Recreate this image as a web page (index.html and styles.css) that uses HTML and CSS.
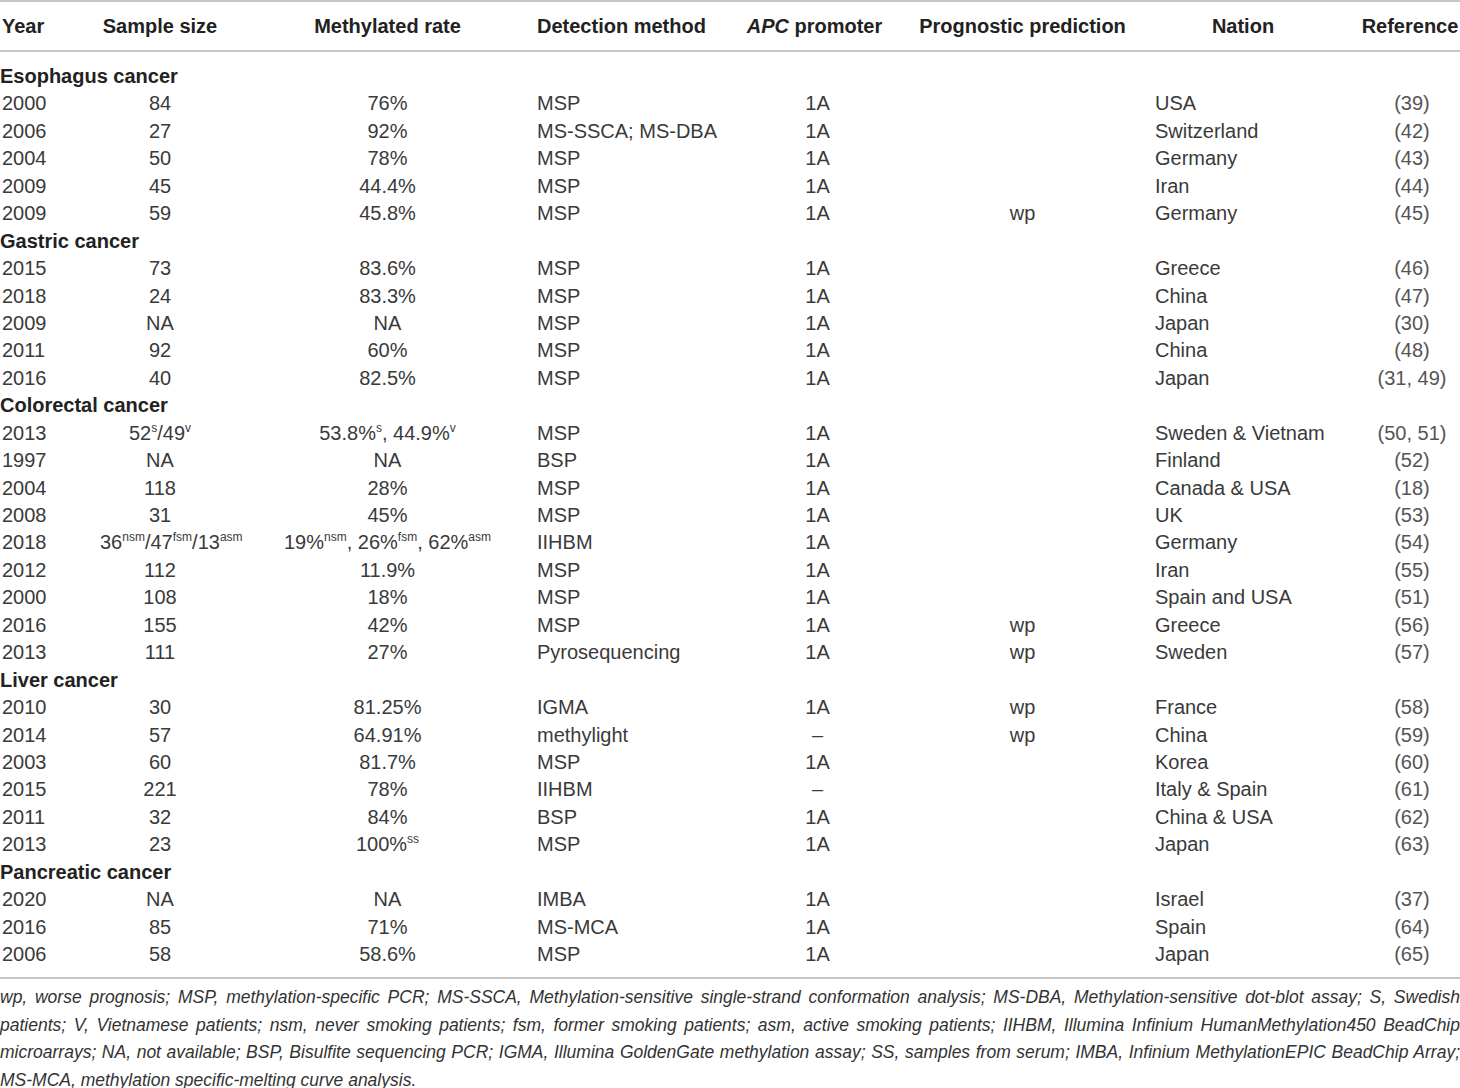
FILE: index.html
```html
<!DOCTYPE html>
<html lang="en">
<head>
    <meta charset="UTF-8">
    <meta name="viewport" content="width=device-width, initial-scale=1.0">
    <title>APC promoter methylation in digestive cancers</title>
    <link rel="stylesheet" href="styles.css">
</head>
<body>
    <table class="data">
        <colgroup>
            <col class="c-year">
            <col class="c-size">
            <col class="c-rate">
            <col class="c-method">
            <col class="c-apc">
            <col class="c-prog">
            <col class="c-nation">
            <col class="c-ref">
        </colgroup>
        <thead>
            <tr>
                <th class="year">Year</th>
                <th class="mid">Sample size</th>
                <th class="rate">Methylated rate</th>
                <th class="left">Detection method</th>
                <th class="mid apc"><i>APC</i> promoter</th>
                <th class="mid">Prognostic prediction</th>
                <th class="mid">Nation</th>
                <th class="ref">Reference</th>
            </tr>
        </thead>
        <tbody>
            <tr class="section first"><td colspan="8">Esophagus cancer</td></tr>
            <tr><td class="year">2000</td><td class="mid">84</td><td class="rate">76%</td><td>MSP</td><td class="mid">1A</td><td class="mid"></td><td>USA</td><td class="ref">(39)</td></tr>
            <tr><td class="year">2006</td><td class="mid">27</td><td class="rate">92%</td><td>MS-SSCA; MS-DBA</td><td class="mid">1A</td><td class="mid"></td><td>Switzerland</td><td class="ref">(42)</td></tr>
            <tr><td class="year">2004</td><td class="mid">50</td><td class="rate">78%</td><td>MSP</td><td class="mid">1A</td><td class="mid"></td><td>Germany</td><td class="ref">(43)</td></tr>
            <tr><td class="year">2009</td><td class="mid">45</td><td class="rate">44.4%</td><td>MSP</td><td class="mid">1A</td><td class="mid"></td><td>Iran</td><td class="ref">(44)</td></tr>
            <tr><td class="year">2009</td><td class="mid">59</td><td class="rate">45.8%</td><td>MSP</td><td class="mid">1A</td><td class="mid">wp</td><td>Germany</td><td class="ref">(45)</td></tr>

            <tr class="section"><td colspan="8">Gastric cancer</td></tr>
            <tr><td class="year">2015</td><td class="mid">73</td><td class="rate">83.6%</td><td>MSP</td><td class="mid">1A</td><td class="mid"></td><td>Greece</td><td class="ref">(46)</td></tr>
            <tr><td class="year">2018</td><td class="mid">24</td><td class="rate">83.3%</td><td>MSP</td><td class="mid">1A</td><td class="mid"></td><td>China</td><td class="ref">(47)</td></tr>
            <tr><td class="year">2009</td><td class="mid">NA</td><td class="rate">NA</td><td>MSP</td><td class="mid">1A</td><td class="mid"></td><td>Japan</td><td class="ref">(30)</td></tr>
            <tr><td class="year">2011</td><td class="mid">92</td><td class="rate">60%</td><td>MSP</td><td class="mid">1A</td><td class="mid"></td><td>China</td><td class="ref">(48)</td></tr>
            <tr><td class="year">2016</td><td class="mid">40</td><td class="rate">82.5%</td><td>MSP</td><td class="mid">1A</td><td class="mid"></td><td>Japan</td><td class="ref">(31, 49)</td></tr>

            <tr class="section"><td colspan="8">Colorectal cancer</td></tr>
            <tr><td class="year">2013</td><td class="mid">52<sup>s</sup>/49<sup>v</sup></td><td class="rate">53.8%<sup>s</sup>, 44.9%<sup>v</sup></td><td>MSP</td><td class="mid">1A</td><td class="mid"></td><td>Sweden &amp; Vietnam</td><td class="ref">(50, 51)</td></tr>
            <tr><td class="year">1997</td><td class="mid">NA</td><td class="rate">NA</td><td>BSP</td><td class="mid">1A</td><td class="mid"></td><td>Finland</td><td class="ref">(52)</td></tr>
            <tr><td class="year">2004</td><td class="mid">118</td><td class="rate">28%</td><td>MSP</td><td class="mid">1A</td><td class="mid"></td><td>Canada &amp; USA</td><td class="ref">(18)</td></tr>
            <tr><td class="year">2008</td><td class="mid">31</td><td class="rate">45%</td><td>MSP</td><td class="mid">1A</td><td class="mid"></td><td>UK</td><td class="ref">(53)</td></tr>
            <tr><td class="year">2018</td><td class="mid">36<sup>nsm</sup>/47<sup>fsm</sup>/13<sup>asm</sup></td><td class="rate">19%<sup>nsm</sup>, 26%<sup>fsm</sup>, 62%<sup>asm</sup></td><td>IIHBM</td><td class="mid">1A</td><td class="mid"></td><td>Germany</td><td class="ref">(54)</td></tr>
            <tr><td class="year">2012</td><td class="mid">112</td><td class="rate">11.9%</td><td>MSP</td><td class="mid">1A</td><td class="mid"></td><td>Iran</td><td class="ref">(55)</td></tr>
            <tr><td class="year">2000</td><td class="mid">108</td><td class="rate">18%</td><td>MSP</td><td class="mid">1A</td><td class="mid"></td><td>Spain and USA</td><td class="ref">(51)</td></tr>
            <tr><td class="year">2016</td><td class="mid">155</td><td class="rate">42%</td><td>MSP</td><td class="mid">1A</td><td class="mid">wp</td><td>Greece</td><td class="ref">(56)</td></tr>
            <tr><td class="year">2013</td><td class="mid">111</td><td class="rate">27%</td><td>Pyrosequencing</td><td class="mid">1A</td><td class="mid">wp</td><td>Sweden</td><td class="ref">(57)</td></tr>

            <tr class="section"><td colspan="8">Liver cancer</td></tr>
            <tr><td class="year">2010</td><td class="mid">30</td><td class="rate">81.25%</td><td>IGMA</td><td class="mid">1A</td><td class="mid">wp</td><td>France</td><td class="ref">(58)</td></tr>
            <tr><td class="year">2014</td><td class="mid">57</td><td class="rate">64.91%</td><td>methylight</td><td class="mid">–</td><td class="mid">wp</td><td>China</td><td class="ref">(59)</td></tr>
            <tr><td class="year">2003</td><td class="mid">60</td><td class="rate">81.7%</td><td>MSP</td><td class="mid">1A</td><td class="mid"></td><td>Korea</td><td class="ref">(60)</td></tr>
            <tr><td class="year">2015</td><td class="mid">221</td><td class="rate">78%</td><td>IIHBM</td><td class="mid">–</td><td class="mid"></td><td>Italy &amp; Spain</td><td class="ref">(61)</td></tr>
            <tr><td class="year">2011</td><td class="mid">32</td><td class="rate">84%</td><td>BSP</td><td class="mid">1A</td><td class="mid"></td><td>China &amp; USA</td><td class="ref">(62)</td></tr>
            <tr><td class="year">2013</td><td class="mid">23</td><td class="rate">100%<sup>ss</sup></td><td>MSP</td><td class="mid">1A</td><td class="mid"></td><td>Japan</td><td class="ref">(63)</td></tr>

            <tr class="section"><td colspan="8">Pancreatic cancer</td></tr>
            <tr><td class="year">2020</td><td class="mid">NA</td><td class="rate">NA</td><td>IMBA</td><td class="mid">1A</td><td class="mid"></td><td>Israel</td><td class="ref">(37)</td></tr>
            <tr><td class="year">2016</td><td class="mid">85</td><td class="rate">71%</td><td>MS-MCA</td><td class="mid">1A</td><td class="mid"></td><td>Spain</td><td class="ref">(64)</td></tr>
            <tr class="last"><td class="year">2006</td><td class="mid">58</td><td class="rate">58.6%</td><td>MSP</td><td class="mid">1A</td><td class="mid"></td><td>Japan</td><td class="ref">(65)</td></tr>
        </tbody>
    </table>

    <div class="notes">
        <span class="line">wp, worse prognosis; MSP, methylation-specific PCR; MS-SSCA, Methylation-sensitive single-strand conformation analysis; MS-DBA, Methylation-sensitive dot-blot assay; S, Swedish</span>
        <span class="line">patients; V, Vietnamese patients; nsm, never smoking patients; fsm, former smoking patients; asm, active smoking patients; IIHBM, Illumina Infinium HumanMethylation450 BeadChip</span>
        <span class="line">microarrays; NA, not available; BSP, Bisulfite sequencing PCR; IGMA, Illumina GoldenGate methylation assay; SS, samples from serum; IMBA, Infinium MethylationEPIC BeadChip Array;</span>
        <span class="line end">MS-MCA, methylation specific-melting curve analysis.</span>
    </div>
</body>
</html>
```

FILE: styles.css
```css
body {
    margin: 0;
    background: #fff;
    color: #3a3a3a;
    font-family: "Liberation Sans", Arial, sans-serif;
    font-size: 20px;
}
.data {
    width: 1460px;
    table-layout: fixed;
    border-collapse: collapse;
    border-top: 2px solid #c6c6c6;
    border-bottom: 2px solid #c6c6c6;
}
.c-year { width: 100px; }
.c-size { width: 120px; }
.c-rate { width: 317px; }
.c-method { width: 208px; }
.c-apc { width: 145px; }
.c-prog { width: 265px; }
.c-nation { width: 176px; }
.c-ref { width: 129px; }

.data th,
.data td {
    padding: 0;
    white-space: nowrap;
    text-align: left;
    vertical-align: middle;
}
.data th {
    height: 48px;
    color: #222;
    font-weight: bold;
}
.data thead tr {
    border-bottom: 2px solid #c6c6c6;
}
.data td {
    height: 27.44px;
    line-height: 27.44px;
}
.data .year {
    padding-left: 2px;
}
.data .mid {
    text-align: center;
}
.data th.apc {
    padding-right: 6px;
}
.data .rate {
    text-align: center;
    padding-left: 18px;
}
.data .ref {
    text-align: center;
    padding-left: 33px;
}
.data th.ref {
    padding-left: 29px;
}
.data td.ref {
    color: #555;
}
.section td {
    color: #222;
    font-weight: bold;
}
.first td {
    padding-top: 11px;
}
.last td {
    padding-bottom: 9px;
}
sup {
    font-size: 12px;
    line-height: 0;
    vertical-align: 8px;
}

.notes {
    margin-top: 5px;
    width: 1460px;
    font-style: italic;
    font-size: 17.5px;
    line-height: 27.5px;
    color: #333;
}
.notes .line {
    display: block;
    white-space: nowrap;
    text-align: justify;
    text-align-last: justify;
}
.notes .end {
    text-align-last: left;
}
```
